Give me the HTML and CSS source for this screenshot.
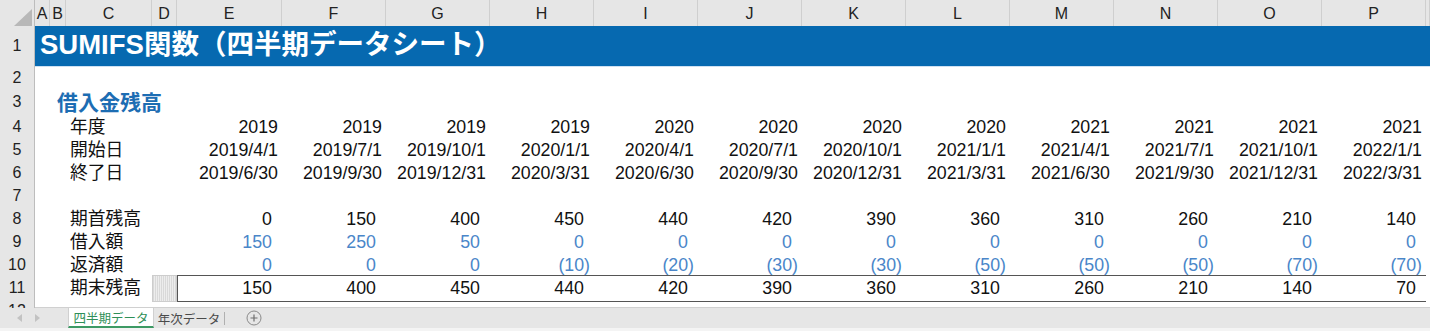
FILE: index.html
```html
<!DOCTYPE html>
<html lang="ja">
<head>
    <meta charset="UTF-8">
    <meta name="viewport" content="width=device-width, initial-scale=1.0">
    <title>SUMIFS関数（四半期データシート）</title>
    <link rel="stylesheet" href="styles.css">
</head>
<body>
<div class="sheet">
    <div class="row row-cols">
        <div class="corner"><span class="corner-tri"></span></div>
        <div class="col">A</div>
        <div class="col">B</div>
        <div class="col">C</div>
        <div class="col">D</div>
        <div class="col">E</div>
        <div class="col">F</div>
        <div class="col">G</div>
        <div class="col">H</div>
        <div class="col">I</div>
        <div class="col">J</div>
        <div class="col">K</div>
        <div class="col">L</div>
        <div class="col">M</div>
        <div class="col">N</div>
        <div class="col">O</div>
        <div class="col">P</div>
        <div class="col"></div>
    </div>

    <div class="row row-title">
        <div class="rh">1</div>
        <div class="title">SUMIFS関数（四半期データシート）</div>
    </div>

    <div class="row">
        <div class="rh">2</div>
    </div>

    <div class="row row-section">
        <div class="rh">3</div>
        <div class="section">借入金残高</div>
    </div>

    <div id="sheetBody"></div>
</div>

<div class="tabbar">
    <div class="tab-nav">
        <span class="nav-arrow nav-left"></span>
        <span class="nav-arrow nav-right"></span>
    </div>
    <div class="tab tab-active">四半期データ</div>
    <div class="tab tab-next">年次データ</div>
    <div class="tab-add">
        <svg width="16" height="16" viewBox="0 0 16 16">
            <circle cx="8" cy="8" r="7" fill="none" stroke="#8a8a8a" stroke-width="1"/>
            <path d="M8 4.5v7M4.5 8h7" stroke="#6e6e6e" stroke-width="1.2"/>
        </svg>
    </div>
</div>

<script>
    var rows = [
        { n: 4, label: '年度', kind: 'text', values: ['2019', '2019', '2019', '2019', '2020', '2020', '2020', '2020', '2021', '2021', '2021', '2021'] },
        { n: 5, label: '開始日', kind: 'text', values: ['2019/4/1', '2019/7/1', '2019/10/1', '2020/1/1', '2020/4/1', '2020/7/1', '2020/10/1', '2021/1/1', '2021/4/1', '2021/7/1', '2021/10/1', '2022/1/1'] },
        { n: 6, label: '終了日', kind: 'text', values: ['2019/6/30', '2019/9/30', '2019/12/31', '2020/3/31', '2020/6/30', '2020/9/30', '2020/12/31', '2021/3/31', '2021/6/30', '2021/9/30', '2021/12/31', '2022/3/31'] },
        { n: 7 },
        { n: 8, label: '期首残高', kind: 'num', values: [0, 150, 400, 450, 440, 420, 390, 360, 310, 260, 210, 140] },
        { n: 9, label: '借入額', kind: 'num', blue: true, values: [150, 250, 50, 0, 0, 0, 0, 0, 0, 0, 0, 0] },
        { n: 10, label: '返済額', kind: 'num', blue: true, values: [0, 0, 0, -10, -20, -30, -30, -50, -50, -50, -70, -70] },
        { n: 11, label: '期末残高', kind: 'num', total: true, values: [150, 400, 450, 440, 420, 390, 360, 310, 260, 210, 140, 70] },
        { n: 12 }
    ];

    function makeCell(className, text) {
        var div = document.createElement('div');
        div.className = className;
        if (text !== undefined) div.textContent = text;
        return div;
    }

    var body = document.getElementById('sheetBody');

    rows.forEach(function (row) {
        var tr = makeCell(row.total ? 'row row-total' : 'row');
        tr.appendChild(makeCell('rh', row.n));
        tr.appendChild(makeCell('cell'));
        tr.appendChild(makeCell('cell'));
        tr.appendChild(makeCell('cell label', row.label || ''));
        tr.appendChild(makeCell(row.total ? 'cell hatch' : 'cell'));

        (row.values || []).forEach(function (value) {
            var cls = 'cell num';
            var text = value;
            if (row.kind === 'num') {
                if (value < 0) {
                    text = '(' + Math.abs(value) + ')';
                } else {
                    cls += ' acc';
                }
            }
            if (row.blue) cls += ' blue';
            if (row.total) cls += ' sum';
            tr.appendChild(makeCell(cls, text));
        });

        body.appendChild(tr);
    });
</script>
</body>
</html>
```

FILE: styles.css
```css
body {
    margin: 0;
    width: 1430px;
    height: 331px;
    overflow: hidden;
    background-color: #fff;
    color: #111;
    font-family: "Liberation Sans", "Noto Sans CJK JP", sans-serif;
}

.sheet {
    height: 308px;
    overflow: hidden;
}

.row {
    display: grid;
    grid-template-columns: 35px 15px 16px 86px 25px 105px repeat(11, 104px) 4px;
    height: 23px;
}

/* column letters */
.row-cols {
    height: 26px;
    background-color: #e6e6e6;
}

.corner {
    display: flex;
    justify-content: flex-end;
    align-items: flex-end;
    padding: 0 2px 2px 0;
    border-right: 1px solid #bdbdbd;
    border-bottom: 1px solid #b5b5b5;
}

.corner-tri {
    width: 0;
    height: 0;
    border-left: 18px solid transparent;
    border-bottom: 17px solid #b8b8b8;
}

.col {
    border-right: 1px solid #cfcfcf;
    border-bottom: 1px solid #b5b5b5;
    text-align: center;
    font-size: 16px;
    line-height: 28px;
    color: #222;
}

/* row numbers */
.rh {
    background-color: #e6e6e6;
    border-right: 1px solid #bdbdbd;
    border-bottom: 1px solid #d4d4d4;
    text-align: center;
    font-size: 16px;
    line-height: 25px;
    color: #222;
}

.row-title {
    height: 39px;
}

.row-title .rh {
    line-height: 40px;
}

.title {
    grid-column: 2 / -1;
    background-color: #0669b0;
    border-bottom: 1px solid #cfe1f2;
    color: #fff;
    font-weight: bold;
    font-size: 27.5px;
    line-height: 38px;
    padding-left: 5px;
    white-space: nowrap;
}

.row-section {
    height: 26px;
}

.row-section .rh {
    line-height: 28px;
}

.section {
    grid-column: 3 / -1;
    color: #1d6db3;
    font-weight: bold;
    font-size: 21px;
    line-height: 30px;
    padding-left: 7px;
    white-space: nowrap;
}

.cell {
    font-size: 17.8px;
    line-height: 27px;
    white-space: nowrap;
    box-sizing: border-box;
}

.label {
    padding-left: 4px;
}

.num {
    text-align: right;
    padding-right: 4px;
}

.num.acc {
    padding-right: 10px;
}

.blue {
    color: #4a86c9;
}

.sum {
    border-top: 1px solid #555;
    border-bottom: 1px solid #555;
    line-height: 24px;
}

.row-total .cell.sum:nth-child(6) {
    border-left: 1px solid #555;
}

.hatch {
    background: repeating-linear-gradient(90deg, #d9d9d9 0 1px, #ededed 1px 2px);
    border: 1px solid #cdcdcd;
}

/* sheet tabs */
.tabbar {
    display: flex;
    align-items: stretch;
    height: 20px;
    background-color: #e6e6e6;
    border-top: 1px solid #d0d0d0;
    border-bottom: 3px solid #f4f4f4;
    margin-top: -1px;
}

.tab-nav {
    width: 68px;
    display: flex;
    align-items: center;
    gap: 13px;
    padding-left: 17px;
    box-sizing: border-box;
}

.nav-arrow {
    width: 0;
    height: 0;
    border-top: 4px solid transparent;
    border-bottom: 4px solid transparent;
}

.nav-left {
    border-right: 5px solid #c2c2c2;
}

.nav-right {
    border-left: 5px solid #c2c2c2;
}

.tab {
    display: flex;
    align-items: center;
    justify-content: center;
    box-sizing: border-box;
    font-size: 12.5px;
    white-space: nowrap;
    color: #4a4a4a;
}

.tab-active {
    width: 86px;
    background-color: #fff;
    color: #2f8f58;
    border-bottom: 2px solid #3d9a64;
    border-left: 1px solid #d0d0d0;
    border-right: 1px solid #d0d0d0;
}

.tab-next {
    width: 71px;
    border-right: 1px solid #b0b0b0;
    margin: 4px 0 3px;
}

.tab-add {
    display: flex;
    align-items: center;
    margin-left: 21px;
}
```
